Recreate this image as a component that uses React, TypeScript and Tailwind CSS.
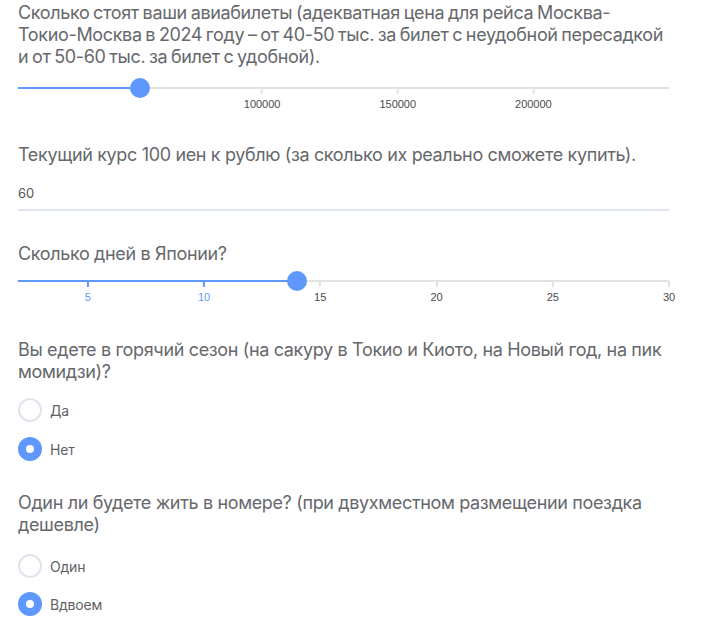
import React from "react";

const font = { fontFamily: "Inter, 'Noto Sans', sans-serif" };

function Slider({
  min,
  max,
  value,
  ticks,
}: {
  min: number;
  max: number;
  value: number;
  ticks: number[];
}) {
  const pct = (v: number) => ((v - min) / (max - min)) * 100;
  return (
    <div className="relative h-[36px] w-[651px]">
      <div className="absolute left-0 right-0 top-[9px] h-[2px] bg-[#e2e2e2]" />
      <div
        className="absolute left-0 top-[9px] h-[2px] bg-[#5f98fc]"
        style={{ width: `${pct(value)}%` }}
      />
      {ticks.map((t) => {
        const active = t <= value;
        return (
          <div
            key={t}
            className="absolute top-[10px] flex flex-col items-center"
            style={{ left: `${pct(t)}%`, transform: "translateX(-50%)" }}
          >
            <div className={`h-[6px] w-[2px] ${active ? "bg-[#5f98fc]" : "bg-[#e2e2e2]"}`} />
            <div
              className={`mt-[3px] text-[11px] leading-[14px] ${active ? "text-[#5f98fc]" : "text-[#4a4a4a]"}`}
              style={{ fontFamily: "'Liberation Sans', Arial, sans-serif" }}
            >
              {t}
            </div>
          </div>
        );
      })}
      <div
        className="absolute top-0 h-[20px] w-[20px] rounded-full bg-[#5f98fc]"
        style={{ left: `${pct(value)}%`, transform: "translateX(-50%)" }}
      />
    </div>
  );
}

function Radio({ label, checked }: { label: string; checked?: boolean }) {
  return (
    <div className="flex h-[24px] items-center gap-[8px]">
      {checked ? (
        <div className="flex h-[24px] w-[24px] items-center justify-center rounded-full bg-[#5f98fc]">
          <div className="h-[8px] w-[8px] rounded-full bg-white" />
        </div>
      ) : (
        <div className="h-[24px] w-[24px] rounded-full border-2 border-[#dfe5ee] bg-white" />
      )}
      <span className="text-[14px] tracking-[-0.2px] text-[#5f6166]">{label}</span>
    </div>
  );
}

const q = "text-[18px] leading-[22px] tracking-[-0.35px] text-[#66686c]";

export default function App() {
  return (
    <div className="min-h-[637px] w-[721px] bg-white" style={font}>
      <div className="ml-[18px] flex w-[690px] flex-col pt-[2px]">
        <p className={`${q} whitespace-nowrap [word-spacing:-1px]`}>
          Сколько стоят ваши авиабилеты (адекватная цена для рейса Москва-
          <br />
          Токио-Москва в 2024 году – от 40-50 тыс. за билет с неудобной пересадкой
          <br />
          и от 50-60 тыс. за билет с удобной).
        </p>
        <div className="mt-[10px]">
          <Slider min={10000} max={250000} value={55000} ticks={[100000, 150000, 200000]} />
        </div>

        <p className={`mt-[30px] ${q}`}>
          Текущий курс 100 иен к рублю (за сколько их реально сможете купить).
        </p>
        <div className="mt-[18px] w-[651px] border-b-2 border-[#dfe5ee] pb-[7px] text-[13px] leading-[18px] text-[#555]">
          60
        </div>

        <p className={`mt-[32px] ${q}`}>Сколько дней в Японии?</p>
        <div className="mt-[6px]">
          <Slider min={2} max={30} value={14} ticks={[5, 10, 15, 20, 25, 30]} />
        </div>

        <p className={`mt-[32px] ${q}`}>
          Вы едете в горячий сезон (на сакуру в Токио и Киото, на Новый год, на пик момидзи)?
        </p>
        <div className="mt-[15px] flex flex-col gap-[15px]">
          <Radio label="Да" />
          <Radio label="Нет" checked />
        </div>

        <p className={`mt-[31px] ${q}`}>
          Один ли будете жить в номере? (при двухместном размещении поездка дешевле)
        </p>
        <div className="mt-[18px] flex flex-col gap-[14px]">
          <Radio label="Один" />
          <Radio label="Вдвоем" checked />
        </div>
      </div>
    </div>
  );
}
